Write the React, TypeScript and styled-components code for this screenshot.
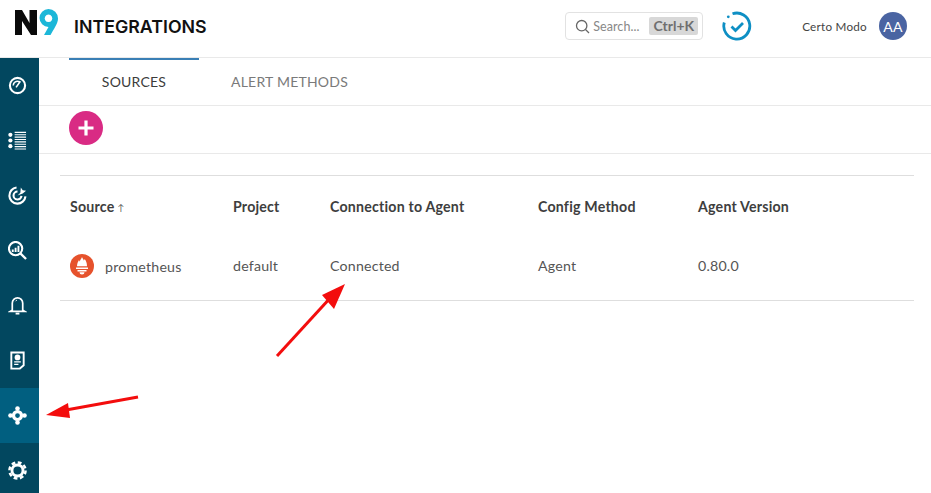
import React from "react";
import styled, { createGlobalStyle } from "styled-components";

const Global = createGlobalStyle`
  html, body { margin: 0; padding: 0; background: #fff; overflow: hidden; }
  body { font-family: "Lato", "Open Sans", sans-serif; }
  * { box-sizing: border-box; }
`;
const Page = styled.div`
  position: relative; width: 931px; height: 493px; overflow: hidden; background: #fff;
  display: flex; flex-direction: column;
`;
const Header = styled.header`
  height: 58px; flex: none; display: flex; align-items: center; border-bottom: 1px solid #e9e9e9;
  padding: 0 24px 0 14px;
`;
const Logo = styled.svg`width: 45px; height: 30px; flex: none; margin-top: -11px;`;
const Title = styled.h1`
  margin: 0 0 0 15px; font: 600 17.8px "Inter", sans-serif; color: #111; flex: 1;
  position: relative; top: -2px;
`;
const SearchBox = styled.div`
  width: 138px; height: 28px; border: 1px solid #e2e2e2; border-radius: 4px; display: flex; align-items: center;
  padding: 0 4px 0 9px; gap: 3px; color: #777; font-size: 13px; margin-top: -5px;
`;
const SearchText = styled.span`flex: 1; color: #888; font-size: 12.5px; letter-spacing: .1px;`;
const Kbd = styled.span`
  background: #d8d8d8; color: #6f6f6f; font-weight: 700; font-size: 14px; padding: 0 4px; height: 18px; line-height: 18px; border-radius: 2px;
`;
const Status = styled.svg`width: 30px; height: 30px; margin: -5px 0 0 19px; flex: none;`;
const UserName = styled.span`margin-left: 50px; font-size: 11.7px; color: #444; letter-spacing: .25px; margin-top: -6px;`;
const Avatar = styled.div`
  width: 28px; height: 28px; border-radius: 50%; background: #4a64a2; color: #fff; font-size: 14px;
  display: flex; align-items: center; justify-content: center; margin: -5px 0 0 12px; letter-spacing: .3px;
`;
const Body = styled.div`flex: 1; display: flex; min-height: 0;`;
const Sidebar = styled.nav`width: 39px; flex: none; background: #02475f; display: flex; flex-direction: column;`;
const NavItem = styled.div<{ $active?: boolean }>`
  height: 55px; flex: none; display: flex; align-items: center; justify-content: center; padding-right: 5px;
  background: ${p => (p.$active ? "#015f80" : "transparent")};
`;
const Main = styled.main`flex: 1; min-width: 0; display: flex; flex-direction: column;`;
const Tabs = styled.div`height: 48px; flex: none; display: flex; padding-left: 30px; border-bottom: 1px solid #e9e9e9;`;
const Tab = styled.div<{ $active?: boolean }>`
  width: ${p => (p.$active ? "130px" : "auto")}; margin-left: ${p => (p.$active ? "0" : "32px")};
  text-align: center; font-size: 14px; padding-top: 13px; height: 47px; letter-spacing: .22px;
  color: ${p => (p.$active ? "#3c3c3c" : "#7a7a7a")};
  border-top: 2px solid ${p => (p.$active ? "#3a7fb5" : "transparent")};
`;
const Toolbar = styled.div`height: 48px; flex: none; padding: 5px 0 0 30px; border-bottom: 1px solid #e9e9e9;`;
const AddButton = styled.button`
  width: 34px; height: 34px; border: 0; padding: 0; border-radius: 50%; background: #d92b84; display: flex; align-items: center; justify-content: center;
`;
const TableWrap = styled.div`margin: 21px 17px 0 21px; border-top: 1px solid #dedede; border-bottom: 1px solid #dedede; height: 126px;`;
const Row = styled.div<{ $head?: boolean }>`
  display: grid; grid-template-columns: 163px 97px 208px 160px 1fr; padding-left: 10px; align-items: center;
  height: ${p => (p.$head ? "60px" : "58px")};
  font-size: 14.2px; color: ${p => (p.$head ? "#3e3e3e" : "#555")}; font-weight: ${p => (p.$head ? 700 : 400)};
  letter-spacing: .2px;
`;
const SourceCell = styled.div`display: flex; align-items: center; gap: 11px; position: relative; top: 1px;`;
const SortMark = styled.span`font-size: 9px; margin-left: 3px; font-weight: 400; color: #555; position: relative; top: -1px;`;
const Arrows = styled.svg`position: absolute; left: 0; top: 0; width: 931px; height: 493px; pointer-events: none;`;

const stroke = { fill: "none", stroke: "#fff", strokeWidth: 2 } as const;
const Ico: React.FC<{ children: React.ReactNode }> = ({ children }) => (
  <svg width="19" height="19" viewBox="0 0 20 20">{children}</svg>
);

export default function App() {
  return (
    <Page>
      <Global />
      <Header>
        <Logo viewBox="0 0 45 30">
          <path d="M1 27V2h7l7.500 13V2h7.500v25h-6L8 13v14z" fill="#0a0a0a" />
          <path fillRule="evenodd" fill="#1cb7d8" d="M34.500 1A9.500 9.500 0 0 1 44 10.500c0 5-4.500 11-7.500 16.500h-6.500l4.500-8A9 9 0 0 1 34.500 1zm0 5.500a3.800 3.800 0 1 0 .01 0z" />
        </Logo>
        <Title>INTEGRATIONS</Title>
        <SearchBox>
          <svg width="15" height="15" viewBox="0 0 15 15" fill="none" stroke="#666" strokeWidth="1.3"><circle cx="6.700" cy="6.700" r="5.200" /><path d="M10.500 10.500 14 14" /></svg>
          <SearchText>Search...</SearchText>
          <Kbd>Ctrl+K</Kbd>
        </SearchBox>
        <Status viewBox="0 0 30 30">
          <path d="M10.500 2.800A13 13 0 1 1 2.300 11.500" fill="none" stroke="#0e8fc4" strokeWidth="2.800" />
          <circle cx="6.300" cy="5.800" r="1.400" fill="#0e8fc4" />
          <path d="M9.500 15.500l4 4 7.500-7.500" fill="none" stroke="#0e8fc4" strokeWidth="2.800" />
        </Status>
        <UserName>Certo Modo</UserName>
        <Avatar>AA</Avatar>
      </Header>
      <Body>
        <Sidebar>
          <NavItem><Ico><circle cx="10" cy="10" r="8" {...stroke} strokeWidth="2.200" /><path d="M5.500 10a4.500 4.500 0 0 1 6.500-4M8.500 12l4.500-6.500" {...stroke} strokeWidth="1.700" /></Ico></NavItem>
          <NavItem><Ico><circle cx="2.500" cy="4" r="2.200" fill="#fff" /><circle cx="2.500" cy="10" r="2.200" fill="#fff" /><circle cx="2.500" cy="16" r="2.200" fill="#fff" /><path d="M7 1.500h12M7 4h12M7 6.500h12M7 9h12M7 11.500h12M7 14h12M7 16.500h12M7 19h12" stroke="#fff" strokeWidth="1.200" /></Ico></NavItem>
          <NavItem><Ico><path d="M9 1.600A8.500 8.500 0 1 0 18.400 11" {...stroke} strokeWidth="2.200" /><path d="M10 5.800a4.200 4.200 0 1 0 4.200 4.700" {...stroke} strokeWidth="2.200" /><path d="M10 10l3-3 .5-5.500 2 3 3.500.5-3.500 3z" fill="#fff" /></Ico></NavItem>
          <NavItem><Ico><circle cx="8" cy="8" r="7" {...stroke} strokeWidth="2.200" /><path d="M13 13l6 6" {...stroke} strokeWidth="2.400" /><path d="M5 9v2.500M8 7v4.500M11 5v6.500" stroke="#fff" strokeWidth="2" /></Ico></NavItem>
          <NavItem><Ico><path d="M4.500 15V7.500a5.500 5.500 0 0 1 11 0V15l2 1.200H2.500z" {...stroke} strokeWidth="1.800" /><path d="M8 5.500a2.500 2.500 0 0 1 1.500-1.200" {...stroke} strokeWidth="1" /><path d="M8 18.500h4" {...stroke} /></Ico></NavItem>
          <NavItem><Ico><path d="M3.500 1.500h13v13.500l-4 3.500h-9z" {...stroke} /><circle cx="10" cy="6.800" r="3" fill="#fff" /><path d="M6.500 11.500h7M6.500 14h4.500" stroke="#fff" strokeWidth="1.300" /></Ico></NavItem>
          <NavItem $active><Ico><circle cx="10" cy="10" r="4.200" fill="none" stroke="#fff" strokeWidth="3.400" /><circle cx="10" cy="2.600" r="2.400" fill="#fff" /><circle cx="10" cy="17.400" r="2.400" fill="#fff" /><circle cx="2.600" cy="10" r="2.400" fill="#fff" /><circle cx="17.400" cy="10" r="2.400" fill="#fff" /></Ico></NavItem>
          <NavItem><Ico><circle cx="10" cy="10" r="5.800" fill="none" stroke="#fff" strokeWidth="3" /><circle cx="10" cy="10" r="8.500" fill="none" stroke="#fff" strokeWidth="2.600" strokeDasharray="4 2.680" /></Ico></NavItem>
        </Sidebar>
        <Main>
          <Tabs>
            <Tab $active>SOURCES</Tab>
            <Tab>ALERT METHODS</Tab>
          </Tabs>
          <Toolbar>
            <AddButton aria-label="Add">
              <svg width="18" height="18" viewBox="0 0 18 18"><path d="M9 1.500v15M1.500 9h15" stroke="#fff" strokeWidth="3.200" /></svg>
            </AddButton>
          </Toolbar>
          <TableWrap>
            <Row $head>
              <div>Source<SortMark>↑</SortMark></div>
              <div>Project</div>
              <div>Connection to Agent</div>
              <div>Config Method</div>
              <div>Agent Version</div>
            </Row>
            <Row>
              <SourceCell>
                <svg width="24" height="24" viewBox="0 0 24 24">
                  <circle cx="12" cy="12" r="12" fill="#e6522c" />
                  <path d="M12 3c.4 1.800 1.600 2 1.700 3.500.6-.3.900-1 .9-1.500 1.400 1.800 2.400 3.500 2.400 7.300H7c0-3.200 1.200-4.700 2-6.300.3.800.5 1.300.9 1.500C10 5.800 11.500 5 12 3z" fill="#fff" />
                  <path d="M6 13.400h12v1.600H6zM7.500 15.900h9v1.500h-9z" fill="#fff" />
                  <path d="M9.500 18.300h5a2.500 2.200 0 0 1-5 0z" fill="#fff" />
                </svg>
                prometheus
              </SourceCell>
              <div>default</div>
              <div>Connected</div>
              <div>Agent</div>
              <div>0.80.0</div>
            </Row>
          </TableWrap>
        </Main>
      </Body>
      <Arrows viewBox="0 0 931 493">
        <path d="M277 356 332 296" stroke="#f30d0d" strokeWidth="3" />
        <path d="M345 284 322 295 334 309z" fill="#f30d0d" />
        <path d="M138 397 66 410" stroke="#f30d0d" strokeWidth="3" />
        <path d="M46 415 68 403 70 418z" fill="#f30d0d" />
      </Arrows>
    </Page>
  );
}
